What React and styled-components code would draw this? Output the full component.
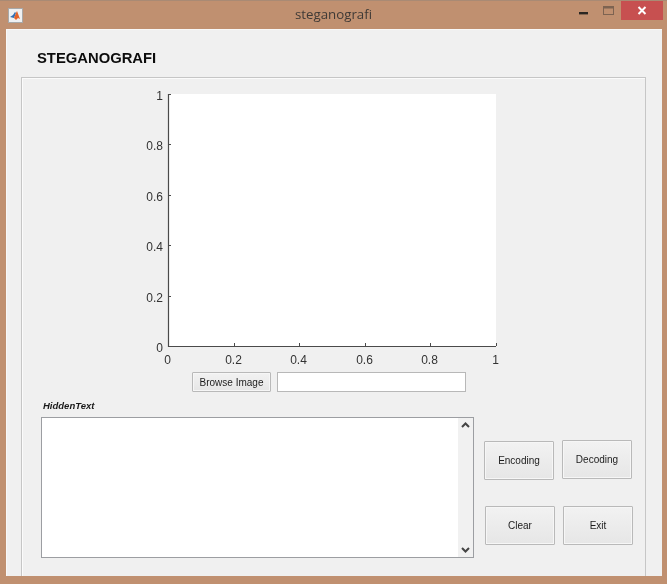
import React from "react";
import styled, { createGlobalStyle } from "styled-components";

const GlobalStyle = createGlobalStyle`
  html, body {
    margin: 0;
    padding: 0;
    background: #c09070;
  }
`;

const Window = styled.div`
  width: 667px;
  height: 584px;
  box-sizing: border-box;
  display: flex;
  flex-direction: column;
  background: #c09070;
  border-top: 1px solid #a98a74;
  font-family: "Liberation Sans", Arial, sans-serif;
  overflow: hidden;
  filter: blur(0.3px);
`;

const TitleBar = styled.div`
  height: 28px;
  flex: none;
  position: relative;
  display: flex;
  align-items: center;
  justify-content: center;
  padding-bottom: 2px;
  box-sizing: border-box;
`;

const AppIcon = styled.svg`
  position: absolute;
  left: 8px;
  top: 7px;
`;

const WindowTitle = styled.span`
  font-family: "Open Sans", sans-serif;
  font-size: 13.3px;
  color: #3f3a36;
`;

const Controls = styled.div`
  position: absolute;
  right: 4px;
  top: 0;
  display: flex;
  align-items: flex-start;
`;

const ControlIcon = styled.div`
  width: ${(p) => p.$w}px;
  height: 19px;
  display: flex;
  align-items: center;
  justify-content: center;
  background: ${(p) => (p.$close ? "#c75050" : "transparent")};
`;

const MinimizeGlyph = styled.svg`
  margin: 6px 0 0 2px;
`;

const Client = styled.div`
  margin: 0 5px 0 6px;
  height: 547px;
  flex: none;
  box-sizing: border-box;
  background: #f0f0f0;
  border-top: 1px solid #f8f8f8;
  border-left: 1px solid #f8f8f8;
  padding: 0 16px 0 14px;
  display: flex;
  flex-direction: column;
`;

const Heading = styled.h1`
  margin: 19px 0 0 16px;
  height: 28px;
  flex: none;
  font-size: 14.8px;
  line-height: 18px;
  font-weight: 700;
  color: #0c0c0c;
`;

const Panel = styled.div`
  flex: 1;
  box-sizing: border-box;
  border: 1px solid #c6c6c6;
  border-bottom: none;
  box-shadow: inset 1px 1px 0 #fbfbfb;
  display: flex;
  flex-direction: column;
`;

const Chart = styled.svg`
  display: block;
  margin: 8px 0 0 118px;
  flex: none;
`;

const BrowseRow = styled.div`
  display: flex;
  gap: 6px;
  margin: 2px 0 0 170px;
  flex: none;
`;

const Button = styled.button`
  box-sizing: border-box;
  width: ${(p) => p.$w}px;
  height: ${(p) => p.$h}px;
  padding: 0;
  border: 1px solid #b9b9b9;
  border-radius: 1px;
  margin-top: ${(p) => p.$top || 0}px;
  background: linear-gradient(#f2f2f2, #e6e6e6);
  box-shadow: inset 0 0 0 1px #f6f6f6;
  font-family: "Liberation Sans", Arial, sans-serif;
  font-size: 10px;
  color: #1c1c1c;
`;

const PathInput = styled.input`
  box-sizing: border-box;
  width: 189px;
  height: 20px;
  background: #fff;
  border: 1px solid #b8b8b8;
  padding: 0 3px;
`;

const FieldLabel = styled.div`
  margin: 8px 0 0 21px;
  height: 17px;
  flex: none;
  font-size: 9.5px;
  line-height: 12px;
  font-weight: 700;
  font-style: italic;
  color: #1a1a1a;
`;

const BottomRow = styled.div`
  display: flex;
  margin-left: 19px;
  flex: none;
`;

const TextBox = styled.div`
  box-sizing: border-box;
  width: 433px;
  height: 141px;
  background: #fff;
  border: 1px solid #9c9ea2;
  display: flex;
  justify-content: flex-end;
`;

const ScrollBar = styled.div`
  width: 15px;
  background: #f1f1f1;
  display: flex;
  flex-direction: column;
  justify-content: space-between;
  align-items: center;
  padding: 4px 0;
`;

const ButtonGrid = styled.div`
  margin: 23px 0 0 10px;
  display: flex;
  flex-direction: column;
  gap: 26px;
`;

const ButtonRow = styled.div`
  display: flex;
  gap: 8px;
  align-items: flex-start;
  margin-left: ${(p) => p.$left || 0}px;
`;

const ticks = [0, 0.2, 0.4, 0.6, 0.8, 1];
const X0 = 28;
const Y0 = 260;
const W = 328;
const H = 252;

const Axes = () => (
  <Chart width="366" height="284" viewBox="0 0 366 284">
    <rect x={X0} y={Y0 - H} width={W} height={H} fill="#fff" />
    <path
      d={`M${X0 + 0.5} ${Y0 - H}V${Y0 + 0.5}H${X0 + W}`}
      fill="none"
      stroke="#4a4a4a"
      strokeWidth="1.2"
    />
    {ticks.map((t) => {
      const x = Math.round(X0 + t * W) + 0.5;
      const y = Math.round(Y0 - t * H) + 0.5;
      return (
        <g key={t}>
          <path d={`M${x} ${Y0}v-3M${X0} ${y}h3`} stroke="#4a4a4a" />
          <text
            x={x - 1}
            y={Y0 + 18}
            textAnchor="middle"
            fontSize="12"
            fill="#333"
            fontFamily="Liberation Sans, Arial, sans-serif"
          >
            {t}
          </text>
          <text
            x={X0 - 5}
            y={y + 5}
            textAnchor="end"
            fontSize="12"
            fill="#333"
            fontFamily="Liberation Sans, Arial, sans-serif"
          >
            {t}
          </text>
        </g>
      );
    })}
  </Chart>
);

const Chevron = ({ down }) => (
  <svg width="9" height="6" viewBox="0 0 9 6">
    <path
      d={down ? "M1 1l3.5 3.5L8 1" : "M1 5l3.5-3.5L8 5"}
      fill="none"
      stroke="#444"
      strokeWidth="2"
    />
  </svg>
);

export default function App() {
  return (
    <>
      <GlobalStyle />
      <Window>
        <TitleBar>
          <AppIcon width="15" height="15" viewBox="0 0 15 15">
            <rect x="0.5" y="0.5" width="14" height="14" fill="#eef0f2" stroke="#a8a8a8" />
            <path d="M2 9l3-2 2-3 1 1-2 5z" fill="#2f6fb5" />
            <path d="M6 10l2-5 1-2 3 8-2-1-2 2z" fill="#e2622a" />
          </AppIcon>
          <WindowTitle>steganografi</WindowTitle>
          <Controls>
            <ControlIcon $w={26}>
              <MinimizeGlyph width="9" height="3" viewBox="0 0 9 3">
                <rect width="9" height="2.4" fill="#2a2622" />
              </MinimizeGlyph>
            </ControlIcon>
            <ControlIcon $w={26}>
              <svg width="11" height="9" viewBox="0 0 11 9">
                <rect x="0.5" y="0.5" width="10" height="8" fill="none" stroke="#7d6351" />
                <rect x="1" y="1" width="9" height="1.5" fill="#7d6351" />
              </svg>
            </ControlIcon>
            <ControlIcon $w={42} $close>
              <svg width="10" height="9" viewBox="0 0 10 9">
                <path d="M1.5 1l7 7M8.5 1l-7 7" stroke="#fff" strokeWidth="2" />
              </svg>
            </ControlIcon>
          </Controls>
        </TitleBar>
        <Client>
          <Heading>STEGANOGRAFI</Heading>
          <Panel>
            <Axes />
            <BrowseRow>
              <Button $w={79} $h={20}>Browse Image</Button>
              <PathInput readOnly />
            </BrowseRow>
            <FieldLabel>HiddenText</FieldLabel>
            <BottomRow>
              <TextBox>
                <ScrollBar>
                  <Chevron />
                  <Chevron down />
                </ScrollBar>
              </TextBox>
              <ButtonGrid>
                <ButtonRow>
                  <Button $w={70} $h={39} $top={1}>Encoding</Button>
                  <Button $w={70} $h={39}>Decoding</Button>
                </ButtonRow>
                <ButtonRow $left={1}>
                  <Button $w={70} $h={39}>Clear</Button>
                  <Button $w={70} $h={39}>Exit</Button>
                </ButtonRow>
              </ButtonGrid>
            </BottomRow>
          </Panel>
        </Client>
      </Window>
    </>
  );
}
